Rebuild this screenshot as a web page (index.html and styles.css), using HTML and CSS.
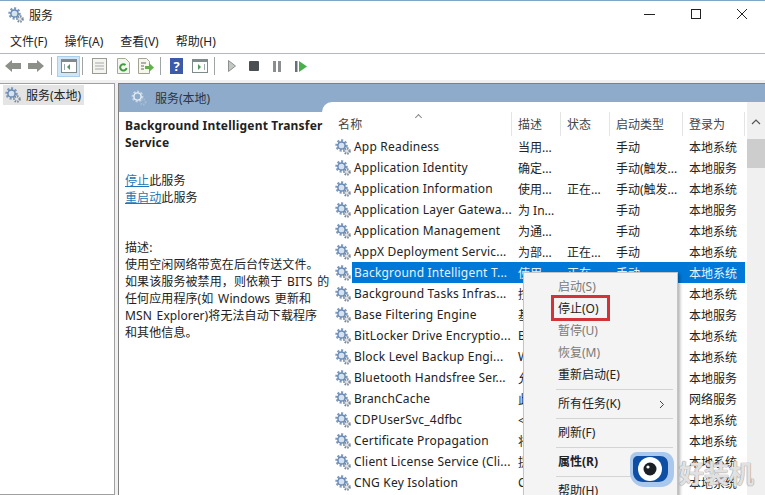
FILE: index.html
```html
<!DOCTYPE html>
<html lang="zh-CN">
  <head>
    <meta charset="utf-8" />
    <title>服务</title>
    <link rel="stylesheet" href="styles.css">
  </head>

  <body>
    <svg class="defs" width="0" height="0">
      <symbol id="gear" viewBox="0 0 16 16">
        <circle cx="6.500" cy="6.500" r="4.800" fill="none" stroke="#7b98bd" stroke-width="2.800" stroke-dasharray="2 1.600"/>
        <circle cx="6.500" cy="6.500" r="3.600" fill="#d5e2f0" stroke="#6a8ab4" stroke-width="1.500"/>
        <circle cx="12" cy="12" r="2.700" fill="#dfe4ea" stroke="#7b8898" stroke-width="2.200" stroke-dasharray="1.400 1.100"/>
      </symbol>
      <symbol id="gear-light" viewBox="0 0 16 16">
        <circle cx="6.500" cy="6.500" r="4.800" fill="none" stroke="#c4d6e6" stroke-width="2.200" stroke-dasharray="2 1.600"/>
        <circle cx="6.500" cy="6.500" r="3.600" fill="none" stroke="#e8f1f8" stroke-width="1.400"/>
        <circle cx="12" cy="12" r="2.600" fill="none" stroke="#a9bccf" stroke-width="1.800" stroke-dasharray="1.400 1.100"/>
      </symbol>
    </svg>

    <div class="window">
      <div class="titlebar">
        <svg class="icon-title"><use href="#gear"/></svg>
        <span class="title-text">服务</span>
        <div class="win-buttons">
          <svg width="14" height="14" viewBox="0 0 14 14"><path d="M1 7.500h11" stroke="#222" fill="none"/></svg>
          <svg width="14" height="14" viewBox="0 0 14 14"><rect x="2.500" y="2.500" width="9" height="9" stroke="#222" fill="none"/></svg>
          <svg width="14" height="14" viewBox="0 0 14 14"><path d="M2 2l10 10M12 2L2 12" stroke="#222" fill="none"/></svg>
        </div>
      </div>

      <div class="menubar">
        <span>文件(F)</span>
        <span>操作(A)</span>
        <span>查看(V)</span>
        <span>帮助(H)</span>
      </div>

      <div class="toolbar">
        <svg class="tool" width="16" height="14" viewBox="0 0 16 14"><path d="M0 7l7-6v3h9v6H7v3z" fill="#8c9088"/></svg>
        <svg class="tool" width="16" height="14" viewBox="0 0 16 14"><path d="M16 7L9 1v3H0v6h9v3z" fill="#8c9088"/></svg>
        <i class="tool-sep"></i>
        <span class="tool-active">
          <svg width="16" height="14" viewBox="0 0 16 14"><rect x=".5" y=".5" width="15" height="13" fill="#fff" stroke="#7f8a8a"/><path d="M1 1h14v2H1z" fill="#7f8a8a"/><path d="M9 5v6L6 8z" fill="#4f9a5a"/><path d="M3 5h1v6H3z" fill="#9aa"/></svg>
        </span>
        <i class="tool-sep sep-b"></i>
        <svg class="tool tool-doc" width="15" height="16" viewBox="0 0 15 16"><rect x=".5" y=".5" width="14" height="15" fill="#f4f4f0" stroke="#9a9a94"/><path d="M3 5h9M3 8h9M3 11h9" stroke="#a8aaa8"/></svg>
        <svg class="tool tool-refresh" width="13" height="16" viewBox="0 0 13 16"><path d="M.5.5h8l4 4v11H.5z" fill="#f4f6ee" stroke="#9fae90"/><path d="M9.500 10a3.200 3.200 0 1 1-1-3" fill="none" stroke="#3f9a3f" stroke-width="2"/></svg>
        <svg class="tool tool-export" width="16" height="16" viewBox="0 0 16 16"><path d="M.5.5h8l3 3v12H.5z" fill="#f6f6ee" stroke="#a3a392"/><path d="M3 5h5M3 8h3M3 11h3" stroke="#666"/><path d="M7 8h4V5l5 4.500-5 4.500v-3H7z" fill="#63b04a"/></svg>
        <i class="tool-sep sep-c"></i>
        <svg class="tool tool-help" width="13" height="16" viewBox="0 0 13 16"><rect width="13" height="16" fill="#3b5aa8"/><text x="6.500" y="13" class="help-mark">?</text></svg>
        <svg class="tool tool-view" width="16" height="14" viewBox="0 0 16 14"><rect x=".5" y=".5" width="15" height="13" fill="#fff" stroke="#7f8a8a"/><path d="M1 1h14v2H1z" fill="#7f8a8a"/><path d="M6 5v6l3-3z" fill="#4f9a5a"/><path d="M12 5h1v6h-1z" fill="#9aa"/></svg>
        <i class="tool-sep sep-d"></i>
        <svg class="tool tool-play" width="8" height="12" viewBox="0 0 8 12"><path d="M.5.5L7.500 6 .5 11.500z" fill="#c4c8c4" stroke="#8c908c"/></svg>
        <svg class="tool tool-stop" width="10" height="10" viewBox="0 0 10 10"><rect width="10" height="10" rx="1" fill="#4a4e50"/></svg>
        <svg class="tool tool-pause" width="8" height="11" viewBox="0 0 8 11"><path d="M0 0h3v11H0zM5 0h3v11H5z" fill="#8a8e90"/></svg>
        <svg class="tool tool-resume" width="12" height="11" viewBox="0 0 12 11"><path d="M0 0h2.500v11H0z" fill="#6a6e78"/><path d="M4 0l8 5.500L4 11z" fill="#46b04a"/></svg>
      </div>

      <div class="main">
        <div class="tree">
          <div class="tree-item">
            <svg class="icon-row"><use href="#gear"/></svg>
            <span>服务(本地)</span>
          </div>
        </div>

        <div class="pane">
          <div class="pane-head">
            <svg class="icon-row"><use href="#gear-light"/></svg>
            <span>服务(本地)</span>
          </div>

          <div class="pane-body">
            <div class="details">
              <h3>Background Intelligent Transfer<br>Service</h3>
              <p class="actions">
                <a>停止</a>此服务<br>
                <a>重启动</a>此服务
              </p>
              <p class="desc">
                描述:<br>
                使用空闲网络带宽在后台传送文件。<br>
                如果该服务被禁用，则依赖于 BITS 的<br>
                任何应用程序(如 Windows 更新和<br>
                MSN Explorer)将无法自动下载程序<br>
                和其他信息。
              </p>
            </div>

            <div class="list">
              <div class="table">
                <div class="row row-head">
                  <span class="cell cell-name">名称<i class="sort-mark"></i></span>
                  <span class="cell">描述</span>
                  <span class="cell">状态</span>
                  <span class="cell">启动类型</span>
                  <span class="cell">登录为</span>
                </div>

                <div class="row"><svg class="icon-row"><use href="#gear"/></svg><span class="cell cell-name">App Readiness</span><span class="cell">当用...</span><span class="cell"></span><span class="cell">手动</span><span class="cell">本地系统</span></div>
                <div class="row"><svg class="icon-row"><use href="#gear"/></svg><span class="cell cell-name">Application Identity</span><span class="cell">确定...</span><span class="cell"></span><span class="cell">手动(触发...</span><span class="cell">本地服务</span></div>
                <div class="row"><svg class="icon-row"><use href="#gear"/></svg><span class="cell cell-name">Application Information</span><span class="cell">使用...</span><span class="cell">正在...</span><span class="cell">手动(触发...</span><span class="cell">本地系统</span></div>
                <div class="row"><svg class="icon-row"><use href="#gear"/></svg><span class="cell cell-name">Application Layer Gatewa...</span><span class="cell">为 In...</span><span class="cell"></span><span class="cell">手动</span><span class="cell">本地服务</span></div>
                <div class="row"><svg class="icon-row"><use href="#gear"/></svg><span class="cell cell-name">Application Management</span><span class="cell">为通...</span><span class="cell"></span><span class="cell">手动</span><span class="cell">本地系统</span></div>
                <div class="row"><svg class="icon-row"><use href="#gear"/></svg><span class="cell cell-name">AppX Deployment Servic...</span><span class="cell">为部...</span><span class="cell">正在...</span><span class="cell">手动</span><span class="cell">本地系统</span></div>
                <div class="row is-selected"><svg class="icon-row"><use href="#gear"/></svg><span class="cell cell-name">Background Intelligent T...</span><span class="cell">使用...</span><span class="cell">正在...</span><span class="cell">手动</span><span class="cell">本地系统</span></div>
                <div class="row"><svg class="icon-row"><use href="#gear"/></svg><span class="cell cell-name">Background Tasks Infras...</span><span class="cell">控制...</span><span class="cell">正在...</span><span class="cell">自动</span><span class="cell">本地系统</span></div>
                <div class="row"><svg class="icon-row"><use href="#gear"/></svg><span class="cell cell-name">Base Filtering Engine</span><span class="cell">基本...</span><span class="cell">正在...</span><span class="cell">自动</span><span class="cell">本地服务</span></div>
                <div class="row"><svg class="icon-row"><use href="#gear"/></svg><span class="cell cell-name">BitLocker Drive Encryptio...</span><span class="cell">BDE...</span><span class="cell"></span><span class="cell">手动</span><span class="cell">本地系统</span></div>
                <div class="row"><svg class="icon-row"><use href="#gear"/></svg><span class="cell cell-name">Block Level Backup Engi...</span><span class="cell">WB...</span><span class="cell"></span><span class="cell">手动</span><span class="cell">本地系统</span></div>
                <div class="row"><svg class="icon-row"><use href="#gear"/></svg><span class="cell cell-name">Bluetooth Handsfree Ser...</span><span class="cell">允许...</span><span class="cell"></span><span class="cell">手动</span><span class="cell">本地服务</span></div>
                <div class="row"><svg class="icon-row"><use href="#gear"/></svg><span class="cell cell-name">BranchCache</span><span class="cell">此服...</span><span class="cell"></span><span class="cell">手动</span><span class="cell">网络服务</span></div>
                <div class="row"><svg class="icon-row"><use href="#gear"/></svg><span class="cell cell-name">CDPUserSvc_4dfbc</span><span class="cell">&lt;无...</span><span class="cell"></span><span class="cell">手动</span><span class="cell">本地系统</span></div>
                <div class="row"><svg class="icon-row"><use href="#gear"/></svg><span class="cell cell-name">Certificate Propagation</span><span class="cell">将用...</span><span class="cell"></span><span class="cell">手动</span><span class="cell">本地系统</span></div>
                <div class="row"><svg class="icon-row"><use href="#gear"/></svg><span class="cell cell-name">Client License Service (Cli...</span><span class="cell">提供...</span><span class="cell"></span><span class="cell">手动</span><span class="cell">本地系统</span></div>
                <div class="row"><svg class="icon-row"><use href="#gear"/></svg><span class="cell cell-name">CNG Key Isolation</span><span class="cell">CN...</span><span class="cell"></span><span class="cell">手动</span><span class="cell">本地系统</span></div>
              </div>

              <div class="scrollbar">
                <svg class="scroll-arrow" width="10" height="6" viewBox="0 0 10 6"><path d="M1 5l4-4 4 4" fill="none" stroke="#555" stroke-width="1.200"/></svg>
                <div class="scroll-thumb"></div>
              </div>
            </div>
          </div>
        </div>
      </div>
    </div>

    <div class="context-menu">
      <div class="menu-item is-disabled">启动(S)</div>
      <div class="menu-item">停止(O)</div>
      <div class="menu-item is-disabled">暂停(U)</div>
      <div class="menu-item is-disabled">恢复(M)</div>
      <div class="menu-item">重新启动(E)</div>
      <div class="menu-sep"></div>
      <div class="menu-item has-sub">所有任务(K)<svg width="6" height="9" viewBox="0 0 6 9"><path d="M1 1l3.500 3.500L1 8" fill="none" stroke="#444"/></svg></div>
      <div class="menu-sep"></div>
      <div class="menu-item">刷新(F)</div>
      <div class="menu-sep"></div>
      <div class="menu-item is-bold">属性(R)</div>
      <div class="menu-sep"></div>
      <div class="menu-item">帮助(H)</div>
    </div>
    <div class="red-box"></div>

    <div class="watermark">
      <svg width="46" height="44" viewBox="0 0 46 44">
        <path d="M8 3h26c7 0 11 5 11 12v10c0 8-6 13-13 13H16C8 38 1 32 1 24V11C1 6 4 3 8 3z" fill="#a9c8ec"/>
        <path d="M9 7h22c5 0 8 3 8 8v8c0 6-4 10-10 10H14C8 33 4 29 4 23V12c0-3 2-5 5-5z" fill="#0f4ea5"/>
        <ellipse cx="21" cy="20" rx="12" ry="12" fill="#fff"/>
        <circle cx="21" cy="20" r="6.500" fill="#1c2026"/>
        <circle cx="19" cy="18" r="1.600" fill="#fff"/>
      </svg>
      <span class="watermark-text">好装机</span>
    </div>
  </body>
</html>
```

FILE: styles.css
```css
* {
  box-sizing: border-box;
}

body {
  margin: 0;
  width: 765px;
  height: 495px;
  overflow: hidden;
  position: relative;
  background-color: #fff;
  color: #222;
  font-family: "Noto Sans", "Noto Sans CJK SC", sans-serif;
  font-size: 12px;
}

.defs {
  position: absolute;
}

.window {
  height: 495px;
  display: flex;
  flex-direction: column;
  border-top: 1px solid #7fa6c4;
  overflow: hidden;
}

.titlebar {
  height: 27px;
  flex: none;
  display: flex;
  align-items: center;
  padding-left: 8px;
}

.icon-title {
  width: 16px;
  height: 16px;
  flex: none;
}

.title-text {
  margin-left: 5px;
}

.win-buttons {
  margin-left: auto;
  display: flex;
  gap: 32px;
  padding-right: 16px;
  margin-top: -1px;
}

.menubar {
  height: 26px;
  flex: none;
  display: flex;
  align-items: center;
  gap: 17px;
  padding-left: 10px;
  border-bottom: 1px solid #b4b8bc;
}

.toolbar {
  height: 26px;
  flex: none;
  display: flex;
  align-items: center;
  padding-left: 5px;
  padding-bottom: 2px;
}

.tool {
  flex: none;
  margin-right: 7px;
}

.tool-sep {
  width: 1px;
  height: 18px;
  background-color: #a0a4a4;
  flex: none;
}

.tool-active {
  width: 23px;
  height: 21px;
  margin-left: 5px;
  background-color: #d0e6f6;
  border: 1px solid #a8d0ec;
  display: flex;
  align-items: center;
  justify-content: center;
  flex: none;
}

.sep-b {
  margin-left: 2px;
  margin-right: 9px;
}

.tool-doc {
  margin-right: 10px;
}

.tool-refresh {
  margin-right: 8px;
}

.tool-export {
  margin-right: 6px;
}

.sep-c {
  margin-right: 9px;
}

.tool-help {
  margin-right: 9px;
}

.tool-view {
  margin-right: 6px;
}

.sep-d {
  margin-right: 13px;
}

.help-mark {
  font-size: 13px;
  font-weight: bold;
  fill: #fff;
  text-anchor: middle;
}

.tool-play {
  margin-right: 13px;
}

.tool-stop {
  margin-right: 14px;
}

.tool-pause {
  margin-right: 14px;
}

.main {
  flex: 1;
  display: flex;
  gap: 3px;
  background-color: #f0f0f0;
  padding-top: 3px;
  min-height: 0;
}

.tree {
  width: 115px;
  flex: none;
  background-color: #fff;
  border: 1px solid #a0a0a0;
  border-left: none;
  padding: 1px 0 0 3px;
}

.tree-item {
  width: 81px;
  height: 20px;
  display: flex;
  align-items: center;
  gap: 5px;
  background-color: #e4e4e4;
  padding-left: 2px;
}

.icon-row {
  width: 16px;
  height: 16px;
  flex: none;
}

.pane {
  flex: 1;
  display: flex;
  flex-direction: column;
  background-color: #fff;
  border-top: 1px solid #808080;
  border-left: 1px solid #808080;
  min-width: 0;
}

.pane-head {
  height: 28px;
  flex: none;
  display: flex;
  align-items: center;
  gap: 8px;
  padding-left: 12px;
  background-color: #8eabcb;
  color: #2b3544;
}

.pane-body {
  flex: 1;
  display: flex;
  min-height: 0;
}

.details {
  width: 203px;
  flex: none;
  padding: 5px 0 0 6px;
  line-height: 17px;
  letter-spacing: .1px;
  word-spacing: 1.500px;
  position: relative;
  z-index: 1;
}

.details h3 {
  margin: 0;
  font-size: 12px;
  font-weight: bold;
  line-height: 17px;
  letter-spacing: .2px;
  word-spacing: 0;
  white-space: nowrap;
}

.details p {
  margin: 0;
}

.actions {
  padding-top: 21px;
}

.actions a {
  color: #1f78b4;
  text-decoration: underline;
}

.desc {
  padding-top: 33px;
  white-space: nowrap;
}

.list {
  flex: 1;
  display: flex;
  background-color: #fff;
  margin-top: -10px;
  border-top-left-radius: 10px;
  position: relative;
  min-width: 0;
}

.table {
  width: 423px;
  flex: none;
}

.row {
  display: grid;
  grid-template-columns: 13px 16px 1px 160px 49px 49px 73px 62px;
  height: 21px;
  align-items: stretch;
  white-space: nowrap;
}

.row .icon-row {
  grid-column: 2;
  align-self: center;
}

.row .cell-name {
  grid-column: 4;
}

.cell {
  display: flex;
  align-items: center;
  padding-left: 6px;
  overflow: hidden;
}

.cell-name {
  padding-left: 2px;
  letter-spacing: .2px;
}

.row-head {
  height: 34px;
  padding-top: 10px;
  color: #444;
  grid-template-columns: 190px 49px 49px 73px 62px;
}

.row-head .cell {
  border-right: 1px solid #e4e4e4;
  position: relative;
  height: 24px;
}

.row-head .cell-name {
  grid-column: 1;
  padding-left: 16px;
}

.sort-mark {
  position: absolute;
  left: 94px;
  top: 3px;
  width: 5px;
  height: 5px;
  border-left: 1px solid #888;
  border-top: 1px solid #888;
  transform: rotate(45deg);
}

.is-selected .cell {
  background-color: #0078d7;
  color: #e6f2fb;
}

.scrollbar {
  width: 18px;
  margin-left: 2px;
  flex: none;
  background-color: #f0f0f0;
  display: flex;
  flex-direction: column;
  align-items: center;
  padding-top: 17px;
}

.scroll-thumb {
  width: 100%;
  height: 29px;
  margin-top: 14px;
  background-color: #cdcdcd;
}

.context-menu {
  position: absolute;
  left: 523px;
  top: 272px;
  width: 155px;
  height: 240px;
  padding: 3px 2px;
  background-color: #f4f4f4;
  border: 1px solid #c4c4c4;
  box-shadow: 2px 2px 3px rgba(0,0,0,.3);
}

.menu-item {
  height: 22px;
  line-height: 22px;
  padding-left: 32px;
  padding-right: 10px;
  display: flex;
  align-items: center;
}

.menu-item.is-disabled {
  color: #7a7a7a;
}

.menu-item.is-bold {
  font-weight: bold;
}

.menu-item.has-sub {
  justify-content: space-between;
}

.menu-sep {
  height: 7px;
  margin-left: 30px;
  margin-right: 2px;
  background: linear-gradient(#d4d4d4, #d4d4d4) center / 100% 1px no-repeat;
}

.red-box {
  position: absolute;
  left: 551px;
  top: 295px;
  width: 59px;
  height: 26px;
  border: 3px solid #d03438;
}

.watermark {
  position: absolute;
  left: 629px;
  top: 449px;
  display: flex;
  align-items: center;
}

.watermark-text {
  margin-left: 4px;
  margin-top: 2px;
  font-size: 25px;
  font-weight: bold;
  white-space: nowrap;
  color: rgba(255,255,255,.75);
  text-shadow: 0 0 1px #8a8a8a, 0 0 1px #8a8a8a;
}
```
